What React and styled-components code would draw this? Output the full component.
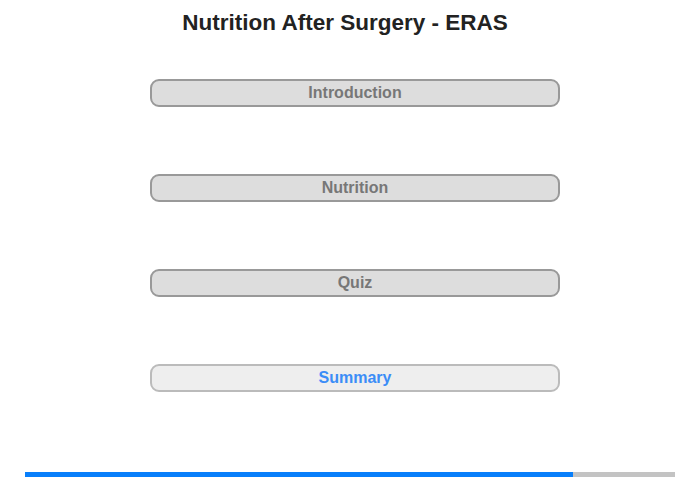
import React from "react";
import styled, { createGlobalStyle } from "styled-components";

const Global = createGlobalStyle`
  html, body { margin: 0; padding: 0; background: #fff; }
  body { font-family: "Liberation Sans", Arial, sans-serif; }
`;

const Page = styled.div`
  width: 700px;
  height: 480px;
  display: flex;
  flex-direction: column;
  box-sizing: border-box;
  padding-top: 10px;
`;

const Title = styled.h1`
  margin: 0;
  width: 690px;
  text-align: center;
  font-size: 22.5px;
  line-height: 26px;
  font-weight: bold;
  color: #222;
`;

const Menu = styled.nav`
  display: flex;
  flex-direction: column;
  gap: 67px;
  margin: 43px 0 0 150px;
  width: 410px;
`;

const MenuButton = styled.button`
  box-sizing: border-box;
  width: 100%;
  height: 28px;
  padding: 0;
  border: 2px solid ${(p) => (p.$current ? "#bbb" : "#999")};
  border-radius: 9px;
  background: ${(p) => (p.$current ? "#eee" : "#ddd")};
  color: ${(p) => (p.$current ? "#3b8df7" : "#777")};
  font-family: "Liberation Sans", Arial, sans-serif;
  font-size: 16px;
  font-weight: bold;
  line-height: 24px;
  text-align: center;
  cursor: pointer;
`;

const Progress = styled.div`
  margin: auto 25px 3px 25px;
  height: 5px;
  background: #c3c3c3;
  display: flex;
`;

const ProgressFill = styled.div`
  height: 100%;
  background: #087ffb;
`;

const items = ["Introduction", "Nutrition", "Quiz", "Summary"];

export default function App() {
  return (
    <>
      <Global />
      <Page>
        <Title>Nutrition After Surgery - ERAS</Title>
        <Menu>
          {items.map((it) => (
            <MenuButton key={it} $current={it === "Summary"}>
              {it}
            </MenuButton>
          ))}
        </Menu>
        <Progress>
          <ProgressFill style={{ width: `${(548 / 650) * 100}%` }} />
        </Progress>
      </Page>
    </>
  );
}
